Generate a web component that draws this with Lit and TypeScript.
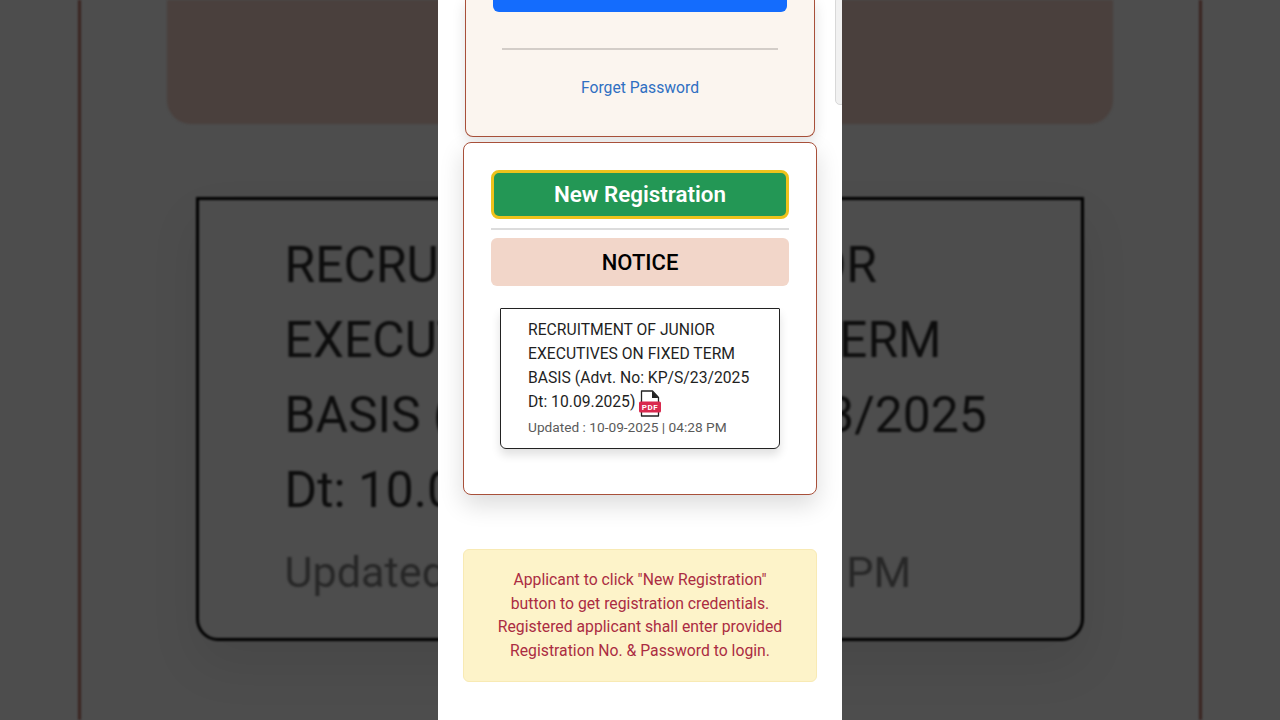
import { LitElement, html, css } from "lit";
import { customElement } from "lit/decorators.js";

const ROW1 = "RECRUITMENT OF JUNIOR EXECUTIVES ON FIXED TERM BASIS (Advt. No: KP/S/23/2025 Dt: 10.09.2025)";
const UPDATED = "Updated : 10-09-2025 | 04:28 PM";

@customElement("app-root")
export class AppRoot extends LitElement {
  static styles = css`
    :host {
      display: block;
      position: relative;
      width: 1280px;
      height: 720px;
      overflow: hidden;
      background: #4d4d4d;
      font-family: Roboto, "Liberation Sans", sans-serif;
    }
    .backdrop {
      position: absolute;
      inset: 0;
      box-sizing: border-box;
      padding: 0 78px;
      filter: blur(1px);
    }
    .bd-frame {
      height: 100%;
      box-sizing: border-box;
      border-left: 3px solid #3a2420;
      border-right: 3px solid #3a2420;
      padding: 0 86px;
    }
    .bd-panel {
      height: 124px;
      background: #4a403d;
      border-radius: 0 0 24px 24px;
      margin-bottom: 73px;
    }
    .bd-box {
      box-sizing: border-box;
      width: 888px;
      height: 444px;
      margin-left: 29px;
      border: 3px solid #000;
      border-radius: 0 0 22px 22px;
      padding: 27.5px 50px 0 85.5px;
      box-shadow: 0 24px 50px rgba(0, 0, 0, 0.08);
      color: #0d0d0d;
    }
    .bd-title {
      font-size: 49.8px;
      line-height: 75px;
    }
    .bd-updated {
      font-size: 43.2px;
      line-height: 50px;
      margin-top: 20.5px;
      color: #272727;
    }

    .phone {
      position: relative;
      box-sizing: border-box;
      width: 404px;
      height: 720px;
      margin: 0 auto;
      background: #fff;
      display: flex;
      flex-direction: column;
      align-items: center;
      overflow: hidden;
    }
    .scroll-edge {
      position: absolute;
      top: -4px;
      right: -4px;
      width: 11px;
      height: 109px;
      box-sizing: border-box;
      background: #f1f1f1;
      border: 1px solid #d8d8d8;
      border-radius: 5px;
    }
    .login {
      box-sizing: border-box;
      width: 350px;
      height: 137px;
      flex: none;
      padding: 0 27px;
      background: #fbf5ef;
      border: 1px solid #a8503a;
      border-top: none;
      border-radius: 0 0 8px 8px;
      box-shadow: 0 4px 14px rgba(0, 0, 0, 0.12);
      display: flex;
      flex-direction: column;
      align-items: stretch;
    }
    .login-btn {
      height: 12px;
      background: #146cfd;
      border-radius: 0 0 6px 6px;
    }
    .login-rule {
      height: 2px;
      margin: 36px 9px 0;
      background: #d3cdc8;
    }
    .forgot {
      margin-top: 28px;
      text-align: center;
      font-size: 15.7px;
      line-height: 20px;
      color: #2f6fc2;
    }
    .card {
      box-sizing: border-box;
      width: 354px;
      height: 353px;
      flex: none;
      margin-top: 5px;
      padding: 27px 27px 0;
      background: #fff;
      border: 1px solid #a8503a;
      border-radius: 8px;
      box-shadow: 0 10px 24px rgba(0, 0, 0, 0.14);
    }
    .new-reg {
      box-sizing: border-box;
      height: 49px;
      background: #239755;
      border: 3px solid #eec21c;
      border-radius: 8px;
      color: #fff;
      font-size: 22.4px;
      font-weight: 600;
      line-height: 43px;
      text-align: center;
    }
    .card-rule {
      height: 2px;
      margin-top: 9px;
      background: #dcdcdc;
    }
    .notice {
      height: 48px;
      margin-top: 8px;
      background: #f2d6c9;
      border-radius: 6px;
      color: #000;
      font-size: 22px;
      font-weight: 500;
      line-height: 49px;
      text-align: center;
    }
    .item {
      box-sizing: border-box;
      height: 141px;
      margin: 22px 9px 0;
      padding: 9px 20px 0 27px;
      border: 1px solid #222;
      border-radius: 1px 1px 6px 6px;
      box-shadow: 0 6px 10px rgba(0, 0, 0, 0.12);
    }
    .item-title {
      font-size: 15.7px;
      line-height: 24px;
      color: #1f1f1f;
    }
    .pdf {
      display: inline-block;
      width: 24px;
      height: 27px;
      vertical-align: -4px;
      margin: -6px 0 -6px -1px;
    }
    .item-date {
      margin-top: 3px;
      font-size: 13.7px;
      line-height: 20px;
      color: #5a5a5a;
    }
    .hint {
      box-sizing: border-box;
      width: 354px;
      height: 133px;
      flex: none;
      margin-top: 54px;
      padding: 18px 10px 0;
      background: #fdf3c9;
      border: 1px solid #f8eab4;
      border-radius: 6px;
      color: #ab2c42;
      font-size: 15.75px;
      line-height: 23.7px;
      text-align: center;
    }
  `;

  private pdfIcon() {
    return html`<svg class="pdf" viewBox="0 0 24 27" aria-hidden="true">
      <path d="M3.5 1h11l6 6.5v18.5h-17z" fill="#fff" stroke="#222" stroke-width="1.3" stroke-linejoin="round"></path>
      <path d="M14 1v7h6.5z" fill="#222"></path>
      <rect x="1" y="11.5" width="22" height="11" rx="1.5" fill="#d9294e"></rect>
      <text x="12" y="20.2" text-anchor="middle" font-family="Roboto, sans-serif" font-size="8" font-weight="700" letter-spacing="0.6" fill="#fff">PDF</text>
    </svg>`;
  }

  render() {
    return html`
      <div class="backdrop">
        <div class="bd-frame">
          <div class="bd-panel"></div>
          <div class="bd-box">
            <div class="bd-title">${ROW1}</div>
            <div class="bd-updated">${UPDATED}</div>
          </div>
        </div>
      </div>
      <div class="phone">
        <div class="scroll-edge"></div>
        <div class="login">
          <div class="login-btn"></div>
          <div class="login-rule"></div>
          <div class="forgot">Forget Password</div>
        </div>
        <div class="card">
          <div class="new-reg">New Registration</div>
          <div class="card-rule"></div>
          <div class="notice">NOTICE</div>
          <div class="item">
            <div class="item-title">${ROW1} ${this.pdfIcon()}</div>
            <div class="item-date">${UPDATED}</div>
          </div>
        </div>
        <div class="hint">
          Applicant to click "New Registration"<br />button to get registration credentials.<br />Registered applicant shall enter provided<br />Registration No. &amp; Password to login.
        </div>
      </div>
    `;
  }
}
